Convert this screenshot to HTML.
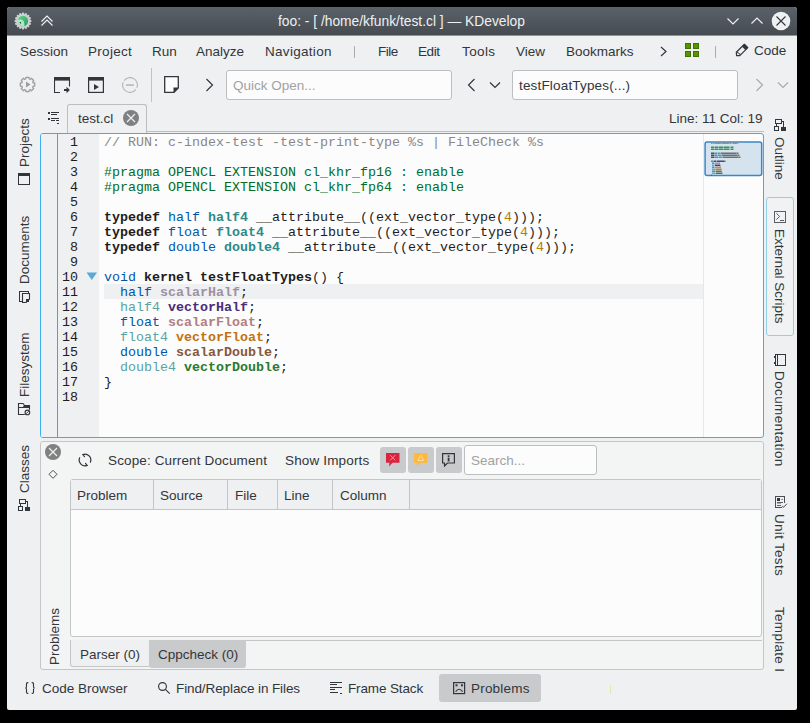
<!DOCTYPE html>
<html><head><meta charset="utf-8">
<style>
html,body{margin:0;padding:0;}
body{width:810px;height:723px;background:#000;position:relative;overflow:hidden;font-family:"Liberation Sans",sans-serif;font-size:13.5px;color:#31363b;}
div,span,svg{position:absolute;}
.win{left:7px;top:7px;width:790px;height:703px;background:#eff0f1;border-radius:3px 3px 2px 2px;overflow:hidden;}
.title{left:7px;top:7px;width:790px;height:28px;background:linear-gradient(#5a6269,#464b51);border-radius:3px 3px 0 0;}
.tline{left:7px;top:35px;width:790px;height:1px;background:#3daee9;}
.t{white-space:pre;line-height:16px;}
.mono{font-family:"Liberation Mono",monospace;font-size:13.33px;line-height:15px;white-space:pre;}
.code span{position:static;}
.kw{font-weight:bold;color:#1f1c1b;}
.dt{color:#0057ae;}
.cm{color:#898887;}
.pp{color:#006e28;}
.num{color:#b08000;}
.btn{border-radius:3px;}
.td{font-weight:bold;color:#2e8a8a;}
.td2{color:#5aa3a3;}
.fn{font-weight:bold;color:#1f1c1b;}
.v1{font-weight:bold;color:#9e91a3;}
.v2{font-weight:bold;color:#4b2c78;}
.v3{font-weight:bold;color:#b1807f;}
.v4{font-weight:bold;color:#c07412;}
.v5{font-weight:bold;color:#86583a;}
.v6{font-weight:bold;color:#2c7a2c;}
</style></head><body>
<div class="win"></div>
<div class="title"></div>
<div class="tline"></div>


<!-- title icons -->
<svg style="left:14px;top:12px" width="18" height="18" viewBox="0 0 18 18">
 <defs><linearGradient id="gg" x1="0.2" y1="0" x2="0.8" y2="1"><stop offset="0" stop-color="#5ccf86"/><stop offset="1" stop-color="#2e9a68"/></linearGradient></defs>
 <g transform="translate(9,9)">
  <g fill="#cfd1d3"><rect x="-1.15" y="-8.4" width="2.3" height="2.6" rx="0.9" transform="rotate(0.0)"/><rect x="-1.15" y="-8.4" width="2.3" height="2.6" rx="0.9" transform="rotate(22.5)"/><rect x="-1.15" y="-8.4" width="2.3" height="2.6" rx="0.9" transform="rotate(45.0)"/><rect x="-1.15" y="-8.4" width="2.3" height="2.6" rx="0.9" transform="rotate(67.5)"/><rect x="-1.15" y="-8.4" width="2.3" height="2.6" rx="0.9" transform="rotate(90.0)"/><rect x="-1.15" y="-8.4" width="2.3" height="2.6" rx="0.9" transform="rotate(112.5)"/><rect x="-1.15" y="-8.4" width="2.3" height="2.6" rx="0.9" transform="rotate(135.0)"/><rect x="-1.15" y="-8.4" width="2.3" height="2.6" rx="0.9" transform="rotate(157.5)"/><rect x="-1.15" y="-8.4" width="2.3" height="2.6" rx="0.9" transform="rotate(180.0)"/><rect x="-1.15" y="-8.4" width="2.3" height="2.6" rx="0.9" transform="rotate(202.5)"/><rect x="-1.15" y="-8.4" width="2.3" height="2.6" rx="0.9" transform="rotate(225.0)"/><rect x="-1.15" y="-8.4" width="2.3" height="2.6" rx="0.9" transform="rotate(247.5)"/><rect x="-1.15" y="-8.4" width="2.3" height="2.6" rx="0.9" transform="rotate(270.0)"/><rect x="-1.15" y="-8.4" width="2.3" height="2.6" rx="0.9" transform="rotate(292.5)"/><rect x="-1.15" y="-8.4" width="2.3" height="2.6" rx="0.9" transform="rotate(315.0)"/><rect x="-1.15" y="-8.4" width="2.3" height="2.6" rx="0.9" transform="rotate(337.5)"/><circle r="6.9"/></g>
  <circle r="5.2" fill="url(#gg)"/>
  <path d="M-5,-1.2 Q-1.2,-3 0.8,0.5 Q1.6,2.5 1.3,5 A5.2,5.2 0 0 1 -5,-1.2Z" fill="#a6ecc0"/>
  <path d="M-3.3,1 Q-2,0.6 -1.8,1.6 Q-2.2,2.8 -3,2.6Z" fill="#1f3a2a"/>
 </g>
</svg>
<svg style="left:40px;top:14px" width="14" height="13" viewBox="0 0 14 13" fill="none" stroke="#f4f5f6" stroke-width="1.1">
 <path d="M1.5,7.5 L7,2 L12.5,7.5"/><path d="M1.5,11.5 L7,6 L12.5,11.5"/>
</svg>
<div class="t" style="left:278px;top:14px;color:#eff0f1;font-size:13.8px;">foo: - [ /home/kfunk/test.cl ] — KDevelop</div>
<svg style="left:726px;top:17px" width="14" height="9" viewBox="0 0 14 9" fill="none" stroke="#f4f5f6" stroke-width="1.1"><path d="M1.5,1.5 L7,7 L12.5,1.5"/></svg>
<svg style="left:750px;top:16px" width="14" height="9" viewBox="0 0 14 9" fill="none" stroke="#f4f5f6" stroke-width="1.1"><path d="M1.5,7.5 L7,2 L12.5,7.5"/></svg>
<svg style="left:771px;top:11px" width="20" height="20" viewBox="0 0 20 20"><circle cx="10" cy="10" r="9.3" fill="#eff0f1"/><path d="M5.5,5.5 L14.5,14.5 M14.5,5.5 L5.5,14.5" stroke="#31363b" stroke-width="1.1"/></svg>

<!-- menu bar -->
<div class="t" style="left:20px;top:44px;">Session</div>
<div class="t" style="left:88px;top:44px;letter-spacing:0.3px;">Project</div>
<div class="t" style="left:152px;top:44px;">Run</div>
<div class="t" style="left:196px;top:44px;">Analyze</div>
<div class="t" style="left:265px;top:44px;letter-spacing:0.3px;">Navigation</div>
<div style="left:354px;top:46px;width:1px;height:12px;background:#a9abad;"></div>
<div class="t" style="left:378px;top:44px;letter-spacing:-0.5px;">File</div>
<div class="t" style="left:418px;top:44px;letter-spacing:-0.4px;">Edit</div>
<div class="t" style="left:462px;top:44px;letter-spacing:0.4px;">Tools</div>
<div class="t" style="left:516px;top:44px;">View</div>
<div class="t" style="left:566px;top:44px;">Bookmarks</div>
<svg style="left:659px;top:46px" width="10" height="11" viewBox="0 0 10 11" fill="none" stroke="#31363b" stroke-width="1.2"><path d="M2,1 L7,5.5 L2,10"/></svg>
<svg style="left:685px;top:43px" width="14" height="14" viewBox="0 0 14 14" shape-rendering="crispEdges"><g fill="#569400" stroke="#3f7300" stroke-width="1"><rect x="0.5" y="0.5" width="5" height="5"/><rect x="8.5" y="0.5" width="5" height="5"/><rect x="0.5" y="8.5" width="5" height="5"/><rect x="8.5" y="8.5" width="5" height="5"/></g></svg>
<div style="left:715px;top:46px;width:1px;height:12px;background:#a9abad;"></div>
<svg style="left:730px;top:40px" width="22" height="20" viewBox="0 0 22 20"><path d="M14.4,4.3 L17.8,7.6 L9.8,15.6 L6.6,15.6 L6.3,12.3 Z" fill="none" stroke="#31363b" stroke-width="1.2" stroke-linejoin="round"/><path d="M14.4,4 L18.2,7.6 L15.6,10.2 L11.9,6.6Z" fill="#31363b"/><path d="M6.8,12.4 L9.6,13.6 L10.2,15" fill="none" stroke="#31363b" stroke-width="1"/></svg>
<div class="t" style="left:754px;top:43px;">Code</div>

<!-- toolbar -->
<svg style="left:19px;top:76px" width="17" height="17" viewBox="0 0 17 17"><path d="M6.93,2.81 L6.89,1.28 L10.11,1.28 L10.07,2.81 L11.41,3.37 L12.46,2.25 L14.75,4.54 L13.63,5.59 L14.19,6.93 L15.72,6.89 L15.72,10.11 L14.19,10.07 L13.63,11.41 L14.75,12.46 L12.46,14.75 L11.41,13.63 L10.07,14.19 L10.11,15.72 L6.89,15.72 L6.93,14.19 L5.59,13.63 L4.54,14.75 L2.25,12.46 L3.37,11.41 L2.81,10.07 L1.28,10.11 L1.28,6.89 L2.81,6.93 L3.37,5.59 L2.25,4.54 L4.54,2.25 L5.59,3.37Z" fill="none" stroke="#9a9c9e" stroke-width="1.2" stroke-linejoin="round"/><path d="M7,5.5 L11.5,8.5 L7,11.5Z" fill="#9a9c9e"/></svg>
<svg style="left:54px;top:77px" width="17" height="17" viewBox="0 0 17 17">
 <rect x="0" y="0" width="16" height="3.6" fill="#31363b"/>
 <path d="M0.5,3 V15.5 H6" fill="none" stroke="#31363b" stroke-width="1.1"/>
 <path d="M15.5,3 V9.5" fill="none" stroke="#31363b" stroke-width="1.1"/>
 <rect x="10" y="12" width="3" height="2" fill="#31363b"/><path d="M12.5,9.8 L15.8,13 L12.5,16.2Z" fill="#31363b"/>
</svg>
<svg style="left:88px;top:77px" width="16" height="16" viewBox="0 0 16 16">
 <rect x="0" y="0" width="16" height="3.6" fill="#31363b"/>
 <rect x="0.6" y="0.6" width="14.8" height="14.8" fill="none" stroke="#31363b" stroke-width="1.2"/>
 <path d="M6,7 L11,10 L6,13Z" fill="#31363b"/>
</svg>
<svg style="left:122px;top:77px" width="16" height="16" viewBox="0 0 16 16"><path d="M1.19,5.11 A7.4,7.4 0 0 0 13.91,12.45 M14.81,10.89 A7.4,7.4 0 0 0 2.09,3.55" fill="none" stroke="#b3b5b7" stroke-width="1.1"/><rect x="4" y="7.3" width="8" height="1.5" fill="#b3b5b7"/></svg>
<div style="left:151px;top:68px;width:1px;height:34px;background:#c0c2c4;"></div>
<svg style="left:164px;top:76px" width="16" height="18" viewBox="0 0 16 18"><path d="M0.7,0.7 H14.3 V12 L10,16.3 H0.7 Z" fill="#fcfcfc" stroke="#31363b" stroke-width="1.3"/><path d="M9.5,16.5 V11.5 H14.5Z" fill="#31363b"/></svg>
<svg style="left:205px;top:78px" width="10" height="14" viewBox="0 0 10 14" fill="none" stroke="#31363b" stroke-width="1.15"><path d="M1.5,1 L7.5,7 L1.5,13"/></svg>
<div style="left:226px;top:70px;width:224px;height:28px;background:#fcfcfc;border:1px solid #bcbebf;border-radius:3px;"></div>
<div class="t" style="left:233px;top:78px;color:#a0a2a4;">Quick Open...</div>
<svg style="left:466px;top:78px" width="10" height="14" viewBox="0 0 10 14" fill="none" stroke="#31363b" stroke-width="1.15"><path d="M8.5,1 L2.5,7 L8.5,13"/></svg>
<svg style="left:489px;top:81px" width="12" height="8" viewBox="0 0 12 8" fill="none" stroke="#31363b" stroke-width="1.2"><path d="M1,1.5 L6,6.5 L11,1.5"/></svg>
<div style="left:512px;top:70px;width:224px;height:28px;background:#fcfcfc;border:1px solid #bcbebf;border-radius:3px;"></div>
<div class="t" style="left:519px;top:78px;letter-spacing:0.17px;">testFloatTypes(...)</div>
<svg style="left:755px;top:78px" width="10" height="14" viewBox="0 0 10 14" fill="none" stroke="#a9abad" stroke-width="1.2"><path d="M1.5,1 L7.5,7 L1.5,13"/></svg>
<svg style="left:777px;top:81px" width="12" height="8" viewBox="0 0 12 8" fill="none" stroke="#a9abad" stroke-width="1.2"><path d="M1,1.5 L6,6.5 L11,1.5"/></svg>


<!-- tab row -->
<svg style="left:44px;top:108px" width="20" height="20" viewBox="0 0 20 20" fill="#31363b" shape-rendering="crispEdges">
 <rect x="4" y="4" width="2" height="2"/><rect x="7" y="4" width="8" height="1"/><rect x="7" y="6" width="6" height="1"/>
 <rect x="4" y="10" width="2" height="2"/><rect x="7" y="10" width="8" height="1"/><rect x="7" y="12" width="4" height="1"/><rect x="12" y="12" width="3" height="1"/>
 <rect x="13" y="15" width="2" height="1"/>
</svg>
<div style="left:67px;top:104px;width:78px;height:28px;border:1px solid #bcbebf;border-bottom:none;border-radius:3px 3px 0 0;background:#eff0f1;"></div>
<div style="left:146px;top:131px;width:618px;height:1px;background:#bcbebf;"></div>
<div class="t" style="left:78px;top:111px;">test.cl</div>
<svg style="left:122px;top:109px" width="18" height="18" viewBox="0 0 18 18"><circle cx="9" cy="9" r="8" fill="#7f8080"/><path d="M5,5 L13,13 M13,5 L5,13" stroke="#eff0f1" stroke-width="1.2"/></svg>
<div class="t" style="left:669px;top:111px;">Line: 11 Col: 19</div>

<!-- editor -->
<div style="left:40px;top:133px;width:722px;height:303px;border:1px solid #3daee9;border-radius:3px;background:#fcfcfc;overflow:hidden;">
  <div style="left:0;top:0;width:58px;height:303px;background:#eff0f1;"></div>
  <div style="left:16px;top:0;width:1px;height:303px;background:#8b8d8f;"></div>
  <div style="left:63px;top:150px;width:599px;height:15px;background:#eff0f1;"></div>
  <div style="left:662px;top:0;width:1px;height:303px;background:#e6e7e8;"></div>
</div>
<div class="mono" style="left:62px;top:135px;width:16px;text-align:right;color:#1f1c1b;">1
2
3
4
5
6
7
8
9
10
11
12
13
14
15
16
17
18</div>
<svg style="left:86px;top:272px" width="12" height="9" viewBox="0 0 12 9"><path d="M0.5,0.5 H11 L5.75,8 Z" fill="#59a8d8"/></svg>
<div class="mono code" style="left:104px;top:135px;color:#1f1c1b;"><span class="cm">// RUN: c-index-test -test-print-type %s | FileCheck %s</span>

<span class="pp">#pragma OPENCL EXTENSION cl_khr_fp16 : enable</span>
<span class="pp">#pragma OPENCL EXTENSION cl_khr_fp64 : enable</span>

<span class="kw">typedef</span> <span class="dt">half</span> <span class="td">half4</span> __attribute__((ext_vector_type(<span class="num">4</span>)));
<span class="kw">typedef</span> <span class="dt">float</span> <span class="td">float4</span> __attribute__((ext_vector_type(<span class="num">4</span>)));
<span class="kw">typedef</span> <span class="dt">double</span> <span class="td">double4</span> __attribute__((ext_vector_type(<span class="num">4</span>)));

<span class="dt">void</span> <span class="kw">kernel</span> <span class="fn">testFloatTypes</span>() {
  <span class="dt">half</span> <span class="v1">scalarHalf</span>;
  <span class="td2">half4</span> <span class="v2">vectorHalf</span>;
  <span class="dt">float</span> <span class="v3">scalarFloat</span>;
  <span class="td2">float4</span> <span class="v4">vectorFloat</span>;
  <span class="dt">double</span> <span class="v5">scalarDouble</span>;
  <span class="td2">double4</span> <span class="v6">vectorDouble</span>;
}
</div>


<!-- left dock (text rotated -90) -->
<div class="t" style="left:0;top:0;transform-origin:0 0;transform:translate(17px,167px) rotate(-90deg);">Projects</div>
<svg style="left:14px;top:169px" width="20" height="20" viewBox="0 0 20 20" shape-rendering="crispEdges"><rect x="4.5" y="4.5" width="11" height="11" fill="none" stroke="#31363b" stroke-width="1.1"/><rect x="4" y="4" width="12" height="3" fill="#31363b"/></svg>
<div class="t" style="left:0;top:0;transform-origin:0 0;transform:translate(17px,284px) rotate(-90deg);">Documents</div>
<svg style="left:14px;top:286px" width="20" height="20" viewBox="0 0 20 20"><rect x="5.5" y="5.5" width="9" height="10" fill="none" stroke="#31363b" stroke-width="1.1" shape-rendering="crispEdges"/><path d="M8.5,7.5 H15.5 V13 L12,16.5 H8.5 Z" fill="#eff0f1" stroke="#31363b" stroke-width="1.1"/><path d="M12,13 H15.8 L12,16.8Z" fill="#31363b"/></svg>
<div class="t" style="left:0;top:0;transform-origin:0 0;transform:translate(17px,397px) rotate(-90deg);">Filesystem</div>
<svg style="left:14px;top:398px" width="20" height="20" viewBox="0 0 20 20"><path d="M10.8,16.5 H4.5 V5.5 H9 L10.6,7.5 H15.5 V11.8" fill="none" stroke="#31363b" stroke-width="1.1" stroke-linejoin="miter"/><path d="M8.3,9.8 L10.2,7 H16 V9.8Z" fill="#31363b"/><rect x="4" y="9" width="12" height="1" fill="#31363b"/><circle cx="13.4" cy="14.4" r="2.3" fill="none" stroke="#31363b" stroke-width="1.1"/><path d="M12,15.8 L14.8,13" stroke="#31363b" stroke-width="0.9"/></svg>
<div class="t" style="left:0;top:0;transform-origin:0 0;transform:translate(17px,493px) rotate(-90deg);">Classes</div>
<svg style="left:14px;top:495px" width="20" height="20" viewBox="0 0 20 20" shape-rendering="crispEdges"><rect x="5.5" y="4.5" width="6" height="4" fill="none" stroke="#31363b" stroke-width="1.1"/><path d="M11.5,6.5 H13.5 V12 M6.5,8.5 V11" fill="none" stroke="#31363b" stroke-width="1.1"/><rect x="4.5" y="11.5" width="4" height="4" fill="none" stroke="#31363b" stroke-width="1.1"/><rect x="11" y="12" width="5" height="4" fill="#31363b"/></svg>

<!-- right dock (text rotated +90) -->
<div class="t" style="left:0;top:0;transform-origin:0 0;transform:translate(787px,137px) rotate(90deg);">Outline</div>
<div style="left:766px;top:197px;width:26px;height:137px;border:1px solid #93cee9;border-radius:3px;background:#f1f2f3;"></div>
<svg style="left:770px;top:206px" width="20" height="20" viewBox="0 0 20 20"><rect x="4.5" y="5.5" width="11" height="11" fill="none" stroke="#5a5e63" stroke-width="1.1" shape-rendering="crispEdges"/><path d="M6.4,7.3 L9.6,10.4 L6.4,13.6" fill="none" stroke="#5a5e63" stroke-width="1"/><rect x="10" y="14" width="4" height="1" fill="#5a5e63"/></svg>
<div class="t" style="left:0;top:0;transform-origin:0 0;transform:translate(787px,229px) rotate(90deg);">External Scripts</div>
<svg style="left:770px;top:350px" width="20" height="20" viewBox="0 0 20 20" shape-rendering="crispEdges"><rect x="5.5" y="4.5" width="10" height="11" fill="none" stroke="#31363b" stroke-width="1.1"/><rect x="7" y="4" width="1" height="12" fill="#31363b"/><rect x="4" y="6.3" width="1.5" height="1.6" fill="#31363b"/><rect x="4" y="12.2" width="1.5" height="1.6" fill="#31363b"/></svg>
<div class="t" style="left:0;top:0;transform-origin:0 0;transform:translate(787px,371px) rotate(90deg);letter-spacing:0.38px;">Documentation</div>
<svg style="left:771px;top:492px" width="20" height="20" viewBox="0 0 20 20"><path d="M10.5,15.5 H4.5 V4.5 H13.5 V11" fill="none" stroke="#4a4e53" stroke-width="1.1" shape-rendering="crispEdges"/><rect x="6" y="6" width="3" height="3" fill="#31363b"/><rect x="10" y="7" width="2" height="1" fill="#909294"/><rect x="6" y="10" width="6" height="1" fill="#5d6165"/><rect x="6" y="11" width="4" height="1" fill="#a7a9ab"/><rect x="6" y="13" width="4" height="1" fill="#5d6165"/><path d="M11.2,13.9 L12.4,15.4 L15.9,11.8" fill="none" stroke="#4a4e53" stroke-width="1"/></svg>
<div class="t" style="left:0;top:0;transform-origin:0 0;transform:translate(787px,514px) rotate(90deg);letter-spacing:0.3px;">Unit Tests</div>
<div class="t" style="left:0;top:0;transform-origin:0 0;transform:translate(787px,607px) rotate(90deg);letter-spacing:0.3px;">Template I</div>

<!-- problems panel -->
<div style="left:40px;top:441px;width:722px;height:227px;border:1px solid #c3c5c6;border-radius:3px;background:#f3f4f4;"></div>
<svg style="left:44px;top:443px" width="18" height="18" viewBox="0 0 18 18"><circle cx="9" cy="9" r="8" fill="#7f8080"/><path d="M5,5 L13,13 M13,5 L5,13" stroke="#eff0f1" stroke-width="1.2"/></svg>
<svg style="left:48px;top:469px" width="11" height="11" viewBox="0 0 11 11"><path d="M5,1.3 L9,5.3 L5,9.3 L1,5.3Z" fill="none" stroke="#4d4d4d" stroke-width="1"/></svg>
<div class="t" style="left:0;top:0;transform-origin:0 0;transform:translate(47px,665px) rotate(-90deg);">Problems</div>
<svg style="left:75px;top:450px" width="20" height="20" viewBox="0 0 20 20" fill="none" stroke="#31363b" stroke-width="1.2" stroke-linecap="round"><path d="M9.5,6.6 L7.83,4.62 A5.8,5.8 0 0 1 15.38,12.17"/><path d="M4.62,7.83 A5.8,5.8 0 0 0 12.17,15.38 L10.5,13.4"/></svg>
<div class="t" style="left:108px;top:453px;letter-spacing:0.13px;">Scope: Current Document</div>
<div class="t" style="left:285px;top:453px;letter-spacing:0.15px;">Show Imports</div>
<div style="left:380px;top:447px;width:26px;height:26px;background:#c9cacb;border-radius:3px;"></div>
<div style="left:408px;top:447px;width:26px;height:26px;background:#c9cacb;border-radius:3px;"></div>
<div style="left:436px;top:447px;width:26px;height:26px;background:#c9cacb;border-radius:3px;"></div>



<div style="left:464px;top:445px;width:131px;height:28px;background:#fcfcfc;border:1px solid #bcbebf;border-radius:3px;"></div>
<div class="t" style="left:471px;top:453px;color:#a0a2a4;">Search...</div>

<div style="left:70px;top:479px;width:690px;height:156px;border:1px solid #c3c5c6;background:#fcfcfc;border-radius:3px;"></div>
<div style="left:71px;top:480px;width:690px;height:29px;background:#eff0f1;border-bottom:1px solid #c3c5c6;"></div>
<div style="left:153px;top:480px;width:1px;height:29px;background:#c3c5c6;"></div>
<div style="left:227px;top:480px;width:1px;height:29px;background:#c3c5c6;"></div>
<div style="left:277px;top:480px;width:1px;height:29px;background:#c3c5c6;"></div>
<div style="left:332px;top:480px;width:1px;height:29px;background:#c3c5c6;"></div>
<div style="left:409px;top:480px;width:1px;height:29px;background:#c3c5c6;"></div>
<div class="t" style="left:77px;top:488px;">Problem</div>
<div class="t" style="left:160px;top:488px;">Source</div>
<div class="t" style="left:235px;top:488px;">File</div>
<div class="t" style="left:284px;top:488px;">Line</div>
<div class="t" style="left:340px;top:488px;">Column</div>

<div style="left:70px;top:640px;width:692px;height:1px;background:#c3c5c6;"></div>
<div style="left:70px;top:640px;width:79px;height:26px;border:1px solid #c3c5c6;border-top:none;background:#eff0f1;border-radius:0 0 3px 3px;"></div>
<div style="left:149px;top:640px;width:97px;height:28px;background:#c9cacb;border-radius:0 0 3px 3px;"></div>
<div class="t" style="left:80px;top:647px;">Parser (0)</div>
<div class="t" style="left:158px;top:647px;">Cppcheck (0)</div>

<!-- bottom bar -->
<svg style="left:24px;top:681px" width="12" height="14" viewBox="0 0 12 14" fill="none" stroke="#31363b" stroke-width="1.1"><path d="M4.3,1.6 H3.7 Q2.5,1.6 2.5,2.8 V5.8 Q2.5,7 1.3,7 Q2.5,7 2.5,8.2 V11.2 Q2.5,12.4 3.7,12.4 H4.3"/><path d="M7.7,1.6 H8.3 Q9.5,1.6 9.5,2.8 V5.8 Q9.5,7 10.7,7 Q9.5,7 9.5,8.2 V11.2 Q9.5,12.4 8.3,12.4 H7.7"/></svg>
<div class="t" style="left:42px;top:681px;">Code Browser</div>
<svg style="left:158px;top:682px" width="13" height="13" viewBox="0 0 13 13" fill="none" stroke="#31363b" stroke-width="1.15"><circle cx="4.5" cy="4.5" r="3.9"/><path d="M7.4,7.4 L11.7,11.7"/></svg>
<div class="t" style="left:176px;top:681px;letter-spacing:-0.1px;">Find/Replace in Files</div>
<svg style="left:326px;top:678px" width="20" height="20" viewBox="0 0 20 20" fill="#31363b" shape-rendering="crispEdges"><rect x="4" y="4" width="12" height="1"/><rect x="4" y="6" width="7" height="1"/><rect x="4" y="9" width="12" height="1"/><rect x="4" y="11" width="5" height="1"/><rect x="4" y="14" width="8" height="1"/><rect x="14" y="15" width="2" height="1"/></svg>
<div class="t" style="left:348px;top:681px;letter-spacing:-0.13px;">Frame Stack</div>
<div style="left:439px;top:674px;width:102px;height:28px;background:#c9cacb;border-radius:3px;"></div>
<svg style="left:448px;top:678px" width="22" height="20" viewBox="0 0 22 20"><rect x="5.6" y="4.6" width="11" height="11" fill="none" stroke="#31363b" stroke-width="1.2"/><rect x="7.5" y="6.3" width="2" height="2" fill="#31363b"/><rect x="13" y="6.3" width="2" height="2" fill="#31363b"/><path d="M7.6,13.6 Q11.1,8.8 14.6,13.6" fill="none" stroke="#31363b" stroke-width="1.1"/></svg>
<div class="t" style="left:471px;top:681px;letter-spacing:0.2px;">Problems</div>
<div style="left:610px;top:685px;width:1px;height:9px;background:#e8e4b0;"></div>


<!-- outline icon -->
<svg style="left:770px;top:115px" width="20" height="20" viewBox="0 0 20 20" shape-rendering="crispEdges"><rect x="5.5" y="4.5" width="6" height="4" fill="none" stroke="#31363b" stroke-width="1.1"/><path d="M11.5,6.5 H13.5 V12 M6.5,8.5 V11" fill="none" stroke="#31363b" stroke-width="1.1"/><rect x="4.5" y="11.5" width="4" height="4" fill="none" stroke="#31363b" stroke-width="1.1"/><rect x="11" y="12" width="5" height="4" fill="#31363b"/></svg>
<!-- minimap -->
<svg style="left:703px;top:134px" width="60" height="302" viewBox="0 0 60 302">
 <rect x="2.1" y="8" width="56.6" height="33.6" rx="2" fill="#d4e3ee" stroke="#3a86c8" stroke-width="1.5"/>
 <g opacity="0.9"><rect x="8.0" y="8.5" width="1.0" height="1.5" fill="#8a8b8c"/><rect x="9.5" y="8.5" width="2.0" height="1.5" fill="#8a8b8c"/><rect x="12.0" y="8.5" width="6.0" height="1.5" fill="#8a8b8c"/><rect x="18.5" y="8.5" width="8.0" height="1.5" fill="#8a8b8c"/><rect x="27.0" y="8.5" width="1.0" height="1.5" fill="#8a8b8c"/><rect x="28.5" y="8.5" width="0.5" height="1.5" fill="#8a8b8c"/><rect x="29.5" y="8.5" width="4.5" height="1.5" fill="#8a8b8c"/><rect x="34.5" y="8.5" width="1.0" height="1.5" fill="#8a8b8c"/><rect x="8.0" y="12.5" width="3.5" height="1.5" fill="#2b8a4e"/><rect x="12.0" y="12.5" width="3.0" height="1.5" fill="#2b8a4e"/><rect x="15.5" y="12.5" width="4.5" height="1.5" fill="#2b8a4e"/><rect x="20.5" y="12.5" width="5.5" height="1.5" fill="#2b8a4e"/><rect x="26.5" y="12.5" width="0.5" height="1.5" fill="#2b8a4e"/><rect x="27.5" y="12.5" width="3.0" height="1.5" fill="#2b8a4e"/><rect x="8.0" y="14.5" width="3.5" height="1.5" fill="#2b8a4e"/><rect x="12.0" y="14.5" width="3.0" height="1.5" fill="#2b8a4e"/><rect x="15.5" y="14.5" width="4.5" height="1.5" fill="#2b8a4e"/><rect x="20.5" y="14.5" width="5.5" height="1.5" fill="#2b8a4e"/><rect x="26.5" y="14.5" width="0.5" height="1.5" fill="#2b8a4e"/><rect x="27.5" y="14.5" width="3.0" height="1.5" fill="#2b8a4e"/><rect x="8.0" y="18.5" width="3.5" height="1.5" fill="#3b4045"/><rect x="12.0" y="18.5" width="2.0" height="1.5" fill="#3f86c6"/><rect x="14.5" y="18.5" width="2.5" height="1.5" fill="#3a9a9a"/><rect x="17.5" y="18.5" width="15.5" height="1.5" fill="#5f6367"/><rect x="33.0" y="18.5" width="0.5" height="1.5" fill="#b08000"/><rect x="33.5" y="18.5" width="2.0" height="1.5" fill="#5f6367"/><rect x="8.0" y="20.5" width="3.5" height="1.5" fill="#3b4045"/><rect x="12.0" y="20.5" width="2.5" height="1.5" fill="#3f86c6"/><rect x="15.0" y="20.5" width="3.0" height="1.5" fill="#3a9a9a"/><rect x="18.5" y="20.5" width="15.5" height="1.5" fill="#5f6367"/><rect x="34.0" y="20.5" width="0.5" height="1.5" fill="#b08000"/><rect x="34.5" y="20.5" width="2.0" height="1.5" fill="#5f6367"/><rect x="8.0" y="22.5" width="3.5" height="1.5" fill="#3b4045"/><rect x="12.0" y="22.5" width="3.0" height="1.5" fill="#3f86c6"/><rect x="15.5" y="22.5" width="3.5" height="1.5" fill="#3a9a9a"/><rect x="19.5" y="22.5" width="15.5" height="1.5" fill="#5f6367"/><rect x="35.0" y="22.5" width="0.5" height="1.5" fill="#b08000"/><rect x="35.5" y="22.5" width="2.0" height="1.5" fill="#5f6367"/><rect x="8.0" y="26.5" width="2.0" height="1.5" fill="#3f86c6"/><rect x="10.5" y="26.5" width="3.0" height="1.5" fill="#3b4045"/><rect x="14.0" y="26.5" width="7.0" height="1.5" fill="#4b2c78"/><rect x="21.0" y="26.5" width="1.0" height="1.5" fill="#5f6367"/><rect x="22.5" y="26.5" width="0.5" height="1.5" fill="#5f6367"/><rect x="9.0" y="28.5" width="2.0" height="1.5" fill="#3f86c6"/><rect x="11.5" y="28.5" width="5.0" height="1.5" fill="#9e91a3"/><rect x="16.5" y="28.5" width="0.5" height="1.5" fill="#5f6367"/><rect x="9.0" y="30.5" width="2.5" height="1.5" fill="#5aa3a3"/><rect x="12.0" y="30.5" width="5.0" height="1.5" fill="#4b2c78"/><rect x="17.0" y="30.5" width="0.5" height="1.5" fill="#5f6367"/><rect x="9.0" y="32.5" width="2.5" height="1.5" fill="#3f86c6"/><rect x="12.0" y="32.5" width="5.5" height="1.5" fill="#b1807f"/><rect x="17.5" y="32.5" width="0.5" height="1.5" fill="#5f6367"/><rect x="9.0" y="34.5" width="3.0" height="1.5" fill="#5aa3a3"/><rect x="12.5" y="34.5" width="5.5" height="1.5" fill="#c07412"/><rect x="18.0" y="34.5" width="0.5" height="1.5" fill="#5f6367"/><rect x="9.0" y="36.5" width="3.0" height="1.5" fill="#3f86c6"/><rect x="12.5" y="36.5" width="6.0" height="1.5" fill="#86583a"/><rect x="18.5" y="36.5" width="0.5" height="1.5" fill="#5f6367"/><rect x="9.0" y="38.5" width="3.5" height="1.5" fill="#5aa3a3"/><rect x="13.0" y="38.5" width="6.0" height="1.5" fill="#2c7a2c"/><rect x="19.0" y="38.5" width="0.5" height="1.5" fill="#5f6367"/><rect x="8.0" y="40.5" width="0.5" height="1.5" fill="#3b4045"/></g>
</svg>

<svg style="left:386px;top:453px" width="14" height="14" viewBox="0 0 14 14"><path d="M0,0 H13.5 V9.7 H6.5 L3,13.5 L3.5,9.7 H0Z" fill="#d8243e"/><path d="M4.2,2.2 L9.3,7.3 M9.3,2.2 L4.2,7.3" stroke="#f3a9b4" stroke-width="0.9"/></svg>
<svg style="left:414px;top:453px" width="14" height="14" viewBox="0 0 14 14"><path d="M0,0 H13.5 V9.7 H6.5 L3,13.5 L3.5,9.7 H0Z" fill="#fdb93e"/><path d="M6.75,2.2 L9.7,7.5 H3.8Z" fill="none" stroke="#ffdca0" stroke-width="0.9"/></svg>
<svg style="left:442px;top:453px" width="14" height="14" viewBox="0 0 14 14"><path d="M0.6,0.6 H12.4 V10 H5.5 L2.5,13 V10 H0.6Z" fill="none" stroke="#31363b" stroke-width="1.2" stroke-linejoin="miter"/><rect x="5.7" y="2.3" width="1.8" height="1.6" fill="#31363b"/><rect x="5.7" y="4.6" width="1.8" height="3.8" fill="#31363b"/></svg>
</body></html>
